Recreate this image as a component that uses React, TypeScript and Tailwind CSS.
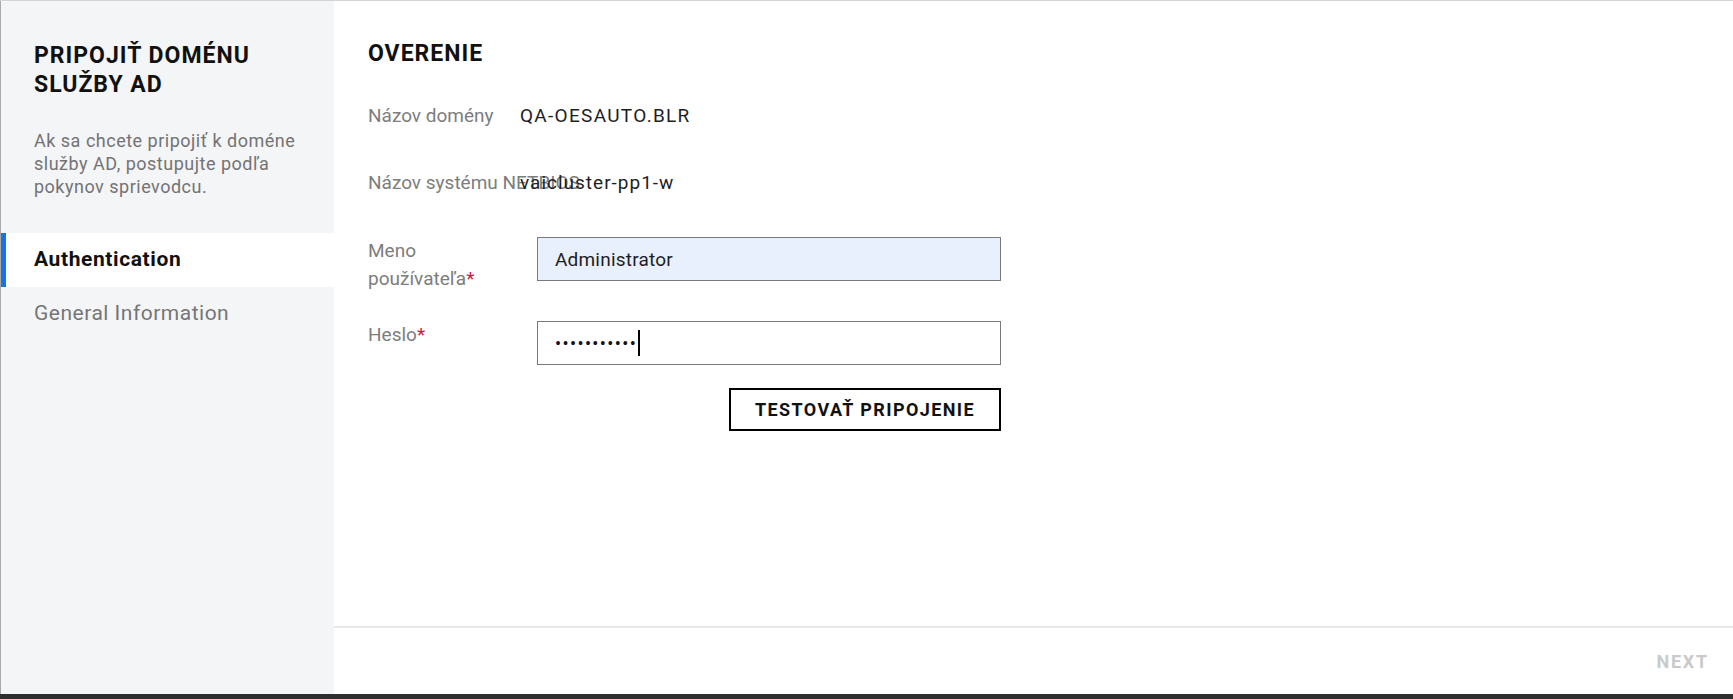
import React from 'react';

const steps = [
  { id: 'auth', label: 'Authentication', active: true },
  { id: 'general', label: 'General Information', active: false },
];

function Required() {
  return <span className="text-[#c0223f]">*</span>;
}

export default function App() {
  return (
    <div className="flex h-[699px] w-full flex-col overflow-hidden bg-white font-['Roboto',sans-serif]">
      <div className="flex flex-1 border-t border-[#d4d4d4]">
        {/* sidebar */}
        <aside className="flex w-[334px] shrink-0 flex-col border-l border-[#a9a9a9] bg-[#f4f5f7] pt-[40px]">
          <h1 className="pl-[33px] pr-[20px] text-[23px] font-bold leading-[29px] tracking-[1px] text-[#111]">
            PRIPOJIŤ DOMÉNU SLUŽBY AD
          </h1>
          <p className="mt-[30px] pl-[33px] pr-[16px] text-[18px] leading-[23px] tracking-[0.5px] text-[#737373]">
            Ak sa chcete pripojiť k doméne služby AD, postupujte podľa pokynov sprievodcu.
          </p>
          <nav className="mt-[35px] flex flex-col">
            {steps.map((s) =>
              s.active ? (
                <div key={s.id} className="flex h-[54px] items-center border-l-[5px] border-[#1473e6] bg-white pl-[28px] text-[21px] font-bold tracking-[0.6px] text-[#111]">
                  {s.label}
                </div>
              ) : (
                <div key={s.id} className="flex h-[54px] items-center pl-[33px] text-[21px] tracking-[0.5px] text-[#767676]">
                  {s.label}
                </div>
              )
            )}
          </nav>
        </aside>

        {/* main */}
        <main className="flex flex-1 flex-col">
          <div className="flex-1 pl-[34px] pt-[38px]">
            <h2 className="text-[23px] font-bold leading-[29px] tracking-[1px] text-[#111]">OVERENIE</h2>

            <div className="flex w-[633px] flex-col text-[19px]">
              <div className="mt-[34px] flex leading-[28px]">
                <div className="w-[152px] shrink-0 whitespace-nowrap text-[#7d7d7d]">Názov domény</div>
                <div className="tracking-[1.3px] text-[#1e1e1e]">QA-OESAUTO.BLR</div>
              </div>

              <div className="mt-[39px] flex leading-[28px]">
                <div className="w-[152px] shrink-0 whitespace-nowrap text-[#7d7d7d]">Názov systému NETBIOS</div>
                <div className="relative tracking-[1px] text-[#1e1e1e]">vaicluster-pp1-w</div>
              </div>

              <div className="mt-[40px] flex">
                <div className="w-[169px] shrink-0 leading-[28px] text-[#7d7d7d]">
                  Meno
                  <br />
                  používateľa<Required />
                </div>
                <input
                  readOnly
                  value="Administrator"
                  className="h-[44px] w-[464px] border border-[#7a7a7a] bg-[#e8f0fe] pl-[17px] text-[19px] tracking-[0.2px] text-[#1e1e1e] outline-none"
                />
              </div>

              <div className="mt-[28px] flex">
                <div className="w-[169px] shrink-0 leading-[28px] text-[#7d7d7d]">
                  Heslo<Required />
                </div>
                <div className="flex h-[44px] w-[464px] items-center border border-[#7a7a7a] bg-white pl-[17px]">
                  <span className="text-[18px] tracking-[1.4px] text-[#111]">•••••••••••</span>
                  <span className="ml-[1px] h-[26px] w-[1.5px] bg-black" />
                </div>
              </div>

              <button className="mt-[23px] h-[43px] w-[272px] self-end border-2 border-black bg-white text-[18px] font-bold tracking-[1.4px] text-[#111]">
                TESTOVAŤ PRIPOJENIE
              </button>
            </div>
          </div>

          <footer className="flex h-[68px] items-center justify-end border-t-2 border-[#e8e8e8] pr-[24px]">
            <span className="text-[18px] font-bold tracking-[1.8px] text-[#cacaca]">NEXT</span>
          </footer>
        </main>
      </div>
      <div className="h-[5px] bg-[#2e2e2e]" />
    </div>
  );
}
